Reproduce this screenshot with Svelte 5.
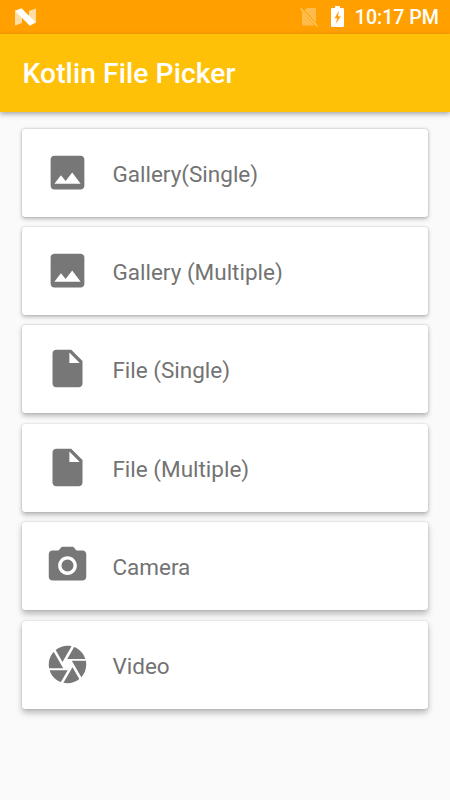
<script lang="ts">
  const icons = {
    image: 'M21 19V5c0-1.1-.9-2-2-2H5c-1.1 0-2 .9-2 2v14c0 1.1.9 2 2 2h14c1.1 0 2-.9 2-2zM8.5 13.5l2.5 3.01L14.5 12l4.5 6H5l3.5-4.5z',
    file: 'M6 2c-1.1 0-1.99.9-1.99 2L4 20c0 1.1.89 2 1.99 2H18c1.1 0 2-.9 2-2V8l-6-6H6zm7 7V3.5L18.5 9H13z',
    camera:
      'M12 8.8a3.2 3.2 0 1 0 0 6.4a3.2 3.2 0 1 0 0-6.4zM9 2L7.17 4H4c-1.1 0-2 .9-2 2v12c0 1.1.9 2 2 2h16c1.1 0 2-.9 2-2V6c0-1.1-.9-2-2-2h-3.17L15 2H9zm3 15c-2.76 0-5-2.24-5-5s2.24-5 5-5 5 2.24 5 5-2.24 5-5 5z',
    shutter:
      'M9.4 10.5l4.77-8.26C13.47 2.09 12.75 2 12 2c-2.4 0-4.6.85-6.32 2.25l3.66 6.35.06-.1zM21.54 9c-.92-2.92-3.15-5.26-6-6.34L11.88 9h9.66zm.26 1h-7.49l.29.5 4.76 8.25C21 16.97 22 14.61 22 12c0-.69-.07-1.35-.2-2zM8.54 12l-3.9-6.75C3.01 7.03 2 9.39 2 12c0 .69.07 1.35.2 2h7.49l-1.15-2zm-6.08 3c.92 2.92 3.15 5.26 6 6.34L12.12 15H2.46zm11.27 0l-3.9 6.76c.7.15 1.42.24 2.17.24 2.4 0 4.6-.85 6.32-2.25l-3.66-6.35-.93 1.6z'
  }

  const items = [
    { label: 'Gallery(Single)', icon: icons.image },
    { label: 'Gallery (Multiple)', icon: icons.image },
    { label: 'File (Single)', icon: icons.file },
    { label: 'File (Multiple)', icon: icons.file },
    { label: 'Camera', icon: icons.camera },
    { label: 'Video', icon: icons.shutter }
  ]
</script>

<div class="screen">
  <header class="status-bar">
    <svg class="logo" viewBox="0 0 21 18" aria-hidden="true">
      <path d="M0 2.5L7 7V15L0 17.5zM21 0.5V15L14 11V3z" fill="#fff" fill-opacity=".65" />
      <path d="M0 2.8L6.5 .2L20.8 14.5L14.8 17.8z" fill="#fff" />
    </svg>
    <div class="status-right">
      <svg class="no-sim" viewBox="0 0 20 20" aria-hidden="true">
        <path d="M4.5 3.2L16 15.5V2.3Q16 1 14.7 1H7zM2 4.5V17.2Q2 18.5 3.3 18.5H14.5z" fill="#fff" fill-opacity=".3" />
        <path d="M.5 1.5L17.5 19.5" stroke="#fff" stroke-opacity=".42" stroke-width="1.3" />
      </svg>
      <svg class="battery" viewBox="0 0 13 21" aria-hidden="true">
        <path fill="#fff" fill-rule="evenodd" d="M4 0H9V2H11.7Q13 2 13 3.3V19.7Q13 21 11.7 21H1.3Q0 21 0 19.7V3.3Q0 2 1.3 2H4zM7.8 5L3.5 12.2H6.2L4.7 18L9.8 10.3H7z" />
      </svg>
      <span class="clock">10:17 PM</span>
    </div>
  </header>

  <div class="toolbar">
    <h1>Kotlin File Picker</h1>
  </div>

  <main class="list">
    {#each items as item, i}
      <button type="button" class="card" style="--depth: {i}">
        <svg class="icon" viewBox="0 0 24 24" aria-hidden="true">
          <path d={item.icon} />
        </svg>
        <span class="label">{item.label}</span>
      </button>
    {/each}
  </main>
</div>

<style>
  :global(body) {
    background: #fafafa;
  }

  .screen {
    min-height: 800px;
    background: #fafafa;
    font-family: Roboto, sans-serif;
  }

  .status-bar {
    display: flex;
    align-items: center;
    justify-content: space-between;
    box-sizing: border-box;
    height: 34px;
    padding: 0 11px 0 15px;
    background: #ffa000;
  }

  .logo {
    width: 21px;
    height: 18px;
  }

  .status-right {
    display: flex;
    align-items: center;
  }

  .no-sim {
    width: 20px;
    height: 20px;
    margin-right: 11px;
  }

  .battery {
    width: 13px;
    height: 21px;
    margin: 0 11px 2px 0;
  }

  .clock {
    padding-top: 1px;
    color: #fff;
    font-size: 19.6px;
    font-weight: 500;
    line-height: 24px;
    white-space: nowrap;
  }

  .toolbar {
    display: flex;
    align-items: center;
    box-sizing: border-box;
    height: 78px;
    padding: 2px 22.5px 0;
    background: #ffc107;
    box-shadow: 0 2px 5px rgba(0, 0, 0, 0.34);
  }

  h1 {
    margin: 0;
    color: #fff;
    font-size: 28.2px;
    font-weight: 500;
    line-height: 32px;
    letter-spacing: 0.1px;
    white-space: nowrap;
  }

  .list {
    display: flex;
    flex-direction: column;
    gap: 10.4px;
    padding: 16.6px 22.4px 0;
  }

  .card {
    display: flex;
    align-items: center;
    box-sizing: border-box;
    width: 100%;
    height: 88px;
    padding: 0 22.5px;
    border: 0;
    border-radius: 3px;
    background: #fff;
    /* shadow grows down the screen, away from the light source */
    box-shadow:
      0 0 2px rgba(0, 0, 0, 0.2),
      0 calc(1.5px + var(--depth) * 0.5px) calc(4px + var(--depth) * 0.5px) rgba(0, 0, 0, 0.26);
    font: inherit;
    text-align: left;
  }

  .icon {
    flex: none;
    width: 45px;
    height: 45px;
    margin: 0 22.5px 1px 0;
    fill: #777;
  }

  .label {
    padding-top: 2px;
    color: #737373;
    font-size: 22.5px;
    line-height: 28px;
    white-space: nowrap;
  }
</style>
